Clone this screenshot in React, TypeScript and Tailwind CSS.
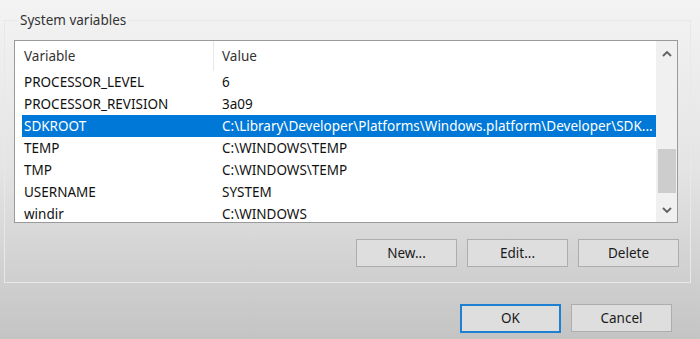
import React from "react";

const rows: { name: string; value: string; selected?: boolean }[] = [
  { name: "PROCESSOR_LEVEL", value: "6" },
  { name: "PROCESSOR_REVISION", value: "3a09" },
  {
    name: "SDKROOT",
    value: "C:\\Library\\Developer\\Platforms\\Windows.platform\\Developer\\SDK...",
    selected: true,
  },
  { name: "TEMP", value: "C:\\WINDOWS\\TEMP" },
  { name: "TMP", value: "C:\\WINDOWS\\TEMP" },
  { name: "USERNAME", value: "SYSTEM" },
  { name: "windir", value: "C:\\WINDOWS" },
];

function Chevron({ up }: { up?: boolean }) {
  return (
    <svg width="10" height="6" viewBox="0 0 10 6" className="block">
      <path
        d={up ? "M1 5 L5 1 L9 5" : "M1 1 L5 5 L9 1"}
        fill="none"
        stroke="#606060"
        strokeWidth="1.8"
      />
    </svg>
  );
}

function Btn({ label, primary }: { label: string; primary?: boolean }) {
  return (
    <div
      className={
        "flex items-center justify-center bg-[#dedede] text-[#1a1a1a] " +
        (primary
          ? "w-[101px] h-[29px] border-2 border-[#1f7fd0]"
          : "w-[101px] h-[28px] border border-[#adadad]")
      }
    >
      {label}
    </div>
  );
}

export default function App() {
  return (
    <div
      className="w-[700px] h-[339px] overflow-hidden bg-gradient-to-b from-[#f3f3f3] via-[#e4e4e4] to-[#c4c4c4] text-[13.5px] text-[#111]"
      style={{ fontFamily: '"Noto Sans", "Segoe UI", sans-serif' }}
    >
      <div className="pt-[10px] pl-[4px]">
        <fieldset className="w-[687px] h-[273px] border border-[#e8e8e8] pl-[9px] pt-[10px]">
          <legend className="ml-[4px] px-[2px] text-[#333]">System variables</legend>
          <div className="w-[664px] h-[183px] border border-[#9a9a9a] bg-white flex overflow-hidden">
            <div className="flex-1 pl-[7px] overflow-hidden">
              <div className="flex h-[30px] items-center text-[#333]">
                <div className="w-[191px] pl-[2px]">Variable</div>
                <div className="w-px h-[30px] bg-[#e8e8e8]" />
                <div className="pl-[8px]">Value</div>
              </div>
              {rows.map((r) => (
                <div
                  key={r.name}
                  className={
                    "flex h-[22px] items-center whitespace-nowrap " +
                    (r.selected ? "bg-[#0078d7] text-white" : "")
                  }
                >
                  <div className="w-[192px] pl-[2px]">{r.name}</div>
                  <div className="pl-[8px] overflow-hidden">{r.value}</div>
                </div>
              ))}
            </div>
            <div className="w-[21px] bg-[#f0f0f0] flex flex-col items-center">
              <div className="h-[26px] flex items-center justify-center">
                <Chevron up />
              </div>
              <div className="mt-[82px] w-[18px] h-[44px] bg-[#cdcdcd]" />
              <div className="mt-[14px] flex items-center justify-center">
                <Chevron />
              </div>
            </div>
          </div>
          <div className="flex justify-end gap-[10px] mt-[16px] pr-[11px]">
            <Btn label="New..." />
            <Btn label="Edit..." />
            <Btn label="Delete" />
          </div>
        </fieldset>
      </div>
      <div className="flex justify-end gap-[10px] mt-[21px] pr-[28px]">
        <Btn label="OK" primary />
        <Btn label="Cancel" />
      </div>
    </div>
  );
}
